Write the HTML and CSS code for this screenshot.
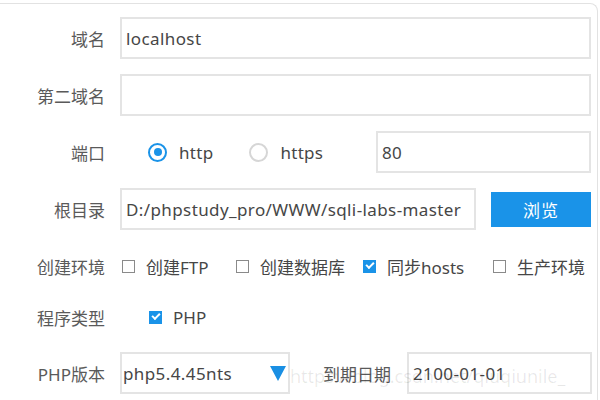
FILE: index.html
```html
<!DOCTYPE html>
<html>
  <head>
    <meta charset="utf-8">
    <title>站点设置</title>
    <link rel="stylesheet" href="styles.css">
  </head>
  <body>
    <form class="panel">
      <div class="row">
        <label class="label">域名</label>
        <input type="text" class="field grow" value="localhost">
      </div>
      <div class="row">
        <label class="label">第二域名</label>
        <input type="text" class="field grow" value="">
      </div>
      <div class="row">
        <label class="label">端口</label>
        <span class="radio checked"></span>
        <span class="opt-text">http</span>
        <span class="radio off"></span>
        <span class="opt-text">https</span>
        <input type="text" class="field port" value="80">
      </div>
      <div class="row">
        <label class="label">根目录</label>
        <input type="text" class="field path" value="D:/phpstudy_pro/WWW/sqli-labs-master">
        <button type="button" class="browse">浏览</button>
      </div>
      <div class="row check-row">
        <label class="label">创建环境</label>
        <div class="env-list">
          <span class="check-item"><span class="box"></span>创建FTP</span>
          <span class="check-item"><span class="box"></span>创建数据库</span>
          <span class="check-item"><span class="box on"></span>同步hosts</span>
          <span class="check-item"><span class="box"></span>生产环境</span>
        </div>
      </div>
      <div class="row type-row">
        <label class="label">程序类型</label>
        <span class="check-item single"><span class="box on"></span>PHP</span>
      </div>
      <div class="row last-row">
        <label class="label">PHP版本</label>
        <div class="field select">
          <span>php5.4.45nts</span>
          <svg class="caret" width="16" height="15" viewBox="0 0 16 15"><path d="M0 0 H16 L8 15 Z" fill="#1a8fe3"/></svg>
        </div>
        <label class="label-inline">到期日期</label>
        <input type="text" class="field date" value="2100-01-01">
      </div>
      <div class="watermark">https://blog.csdn.net/qiuqiunile_</div>
    </form>
  </body>
</html>
```

FILE: styles.css
```css
:root {
  --color-blue: #1a93e8;
  --color-label: #5a5a5a;
  --color-text: #464646;
  --color-border: #e4e4e4;
  --font: "Noto Sans", "Noto Sans CJK SC", sans-serif;
}

* {
  box-sizing: border-box;
}

body {
  margin: 0;
  background: #fff;
  font-family: var(--font);
  font-size: 17px;
  overflow: hidden;
}

.panel {
  position: relative;
  width: 598px;
  height: 397px;
  margin-top: 3px;
  padding: 13px 6px 0 0;
  border-top: 1px solid #e2e2e2;
  border-right: 1px solid #e2e2e2;
  border-top-right-radius: 8px;
  display: flex;
  flex-direction: column;
  gap: 15px;
  overflow: hidden;
}

.row {
  display: flex;
  align-items: center;
  height: 42px;
  flex: none;
}

.label {
  width: 105px;
  flex: none;
  margin-right: 15px;
  text-align: right;
  color: var(--color-label);
  white-space: nowrap;
}

.field {
  height: 42px;
  border: 2px solid var(--color-border);
  padding: 0 4px;
  font-family: var(--font);
  font-size: 17px;
  letter-spacing: 0.4px;
  color: var(--color-text);
  background: #fff;
  outline: none;
  flex: none;
}

.grow {
  flex: 1;
}

.radio {
  width: 19px;
  height: 19px;
  border-radius: 50%;
  flex: none;
  position: relative;
}

.radio.checked {
  margin-left: 28px;
  border: 2px solid var(--color-blue);
}

.radio.checked::after {
  content: "";
  position: absolute;
  left: 3.5px;
  top: 3.5px;
  width: 8px;
  height: 8px;
  border-radius: 50%;
  background: var(--color-blue);
}

.radio.off {
  margin-left: 36px;
  border: 2px solid #d6d6d6;
}

.opt-text {
  margin-left: 12px;
  color: var(--color-text);
  letter-spacing: 0.3px;
}

.port {
  width: 215px;
  margin-left: auto;
}

.path {
  width: 356px;
}

.browse {
  width: 100px;
  height: 35px;
  margin-left: 15px;
  border: none;
  background: var(--color-blue);
  color: #fff;
  font-family: var(--font);
  font-size: 17px;
  letter-spacing: 1px;
  flex: none;
}

.env-list {
  display: grid;
  grid-template-columns: 114px 127px 130px auto;
  align-items: center;
}

.check-item {
  display: flex;
  align-items: center;
  gap: 11px;
  color: var(--color-text);
  white-space: nowrap;
}

.check-item .box {
  width: 13px;
  height: 13px;
  border: 1px solid #8a8a8a;
  flex: none;
  margin-left: 2px;
}

.check-item .box.on {
  border: none;
  background: var(--color-blue);
  position: relative;
}

.check-item .box.on::after {
  content: "";
  position: absolute;
  left: 3px;
  top: 2px;
  width: 6px;
  height: 3px;
  border-left: 2px solid #fff;
  border-bottom: 2px solid #fff;
  transform: rotate(-45deg);
}

.check-item.single {
  margin-left: 27px;
}

.type-row {
  height: 30px;
}

.last-row {
  margin-top: 5px;
}

.select {
  width: 170px;
  display: flex;
  align-items: center;
  justify-content: space-between;
  padding: 0 2px 0 1px;
}

.label-inline {
  margin-left: 33px;
  margin-right: 16px;
  color: var(--color-label);
  white-space: nowrap;
  flex: none;
}

.date {
  width: 185px;
}

.watermark {
  position: absolute;
  left: 290px;
  top: 360px;
  white-space: nowrap;
  font-family: var(--font);
  font-size: 18px;
  color: rgba(0, 0, 0, 0.09);
  pointer-events: none;
}
```
